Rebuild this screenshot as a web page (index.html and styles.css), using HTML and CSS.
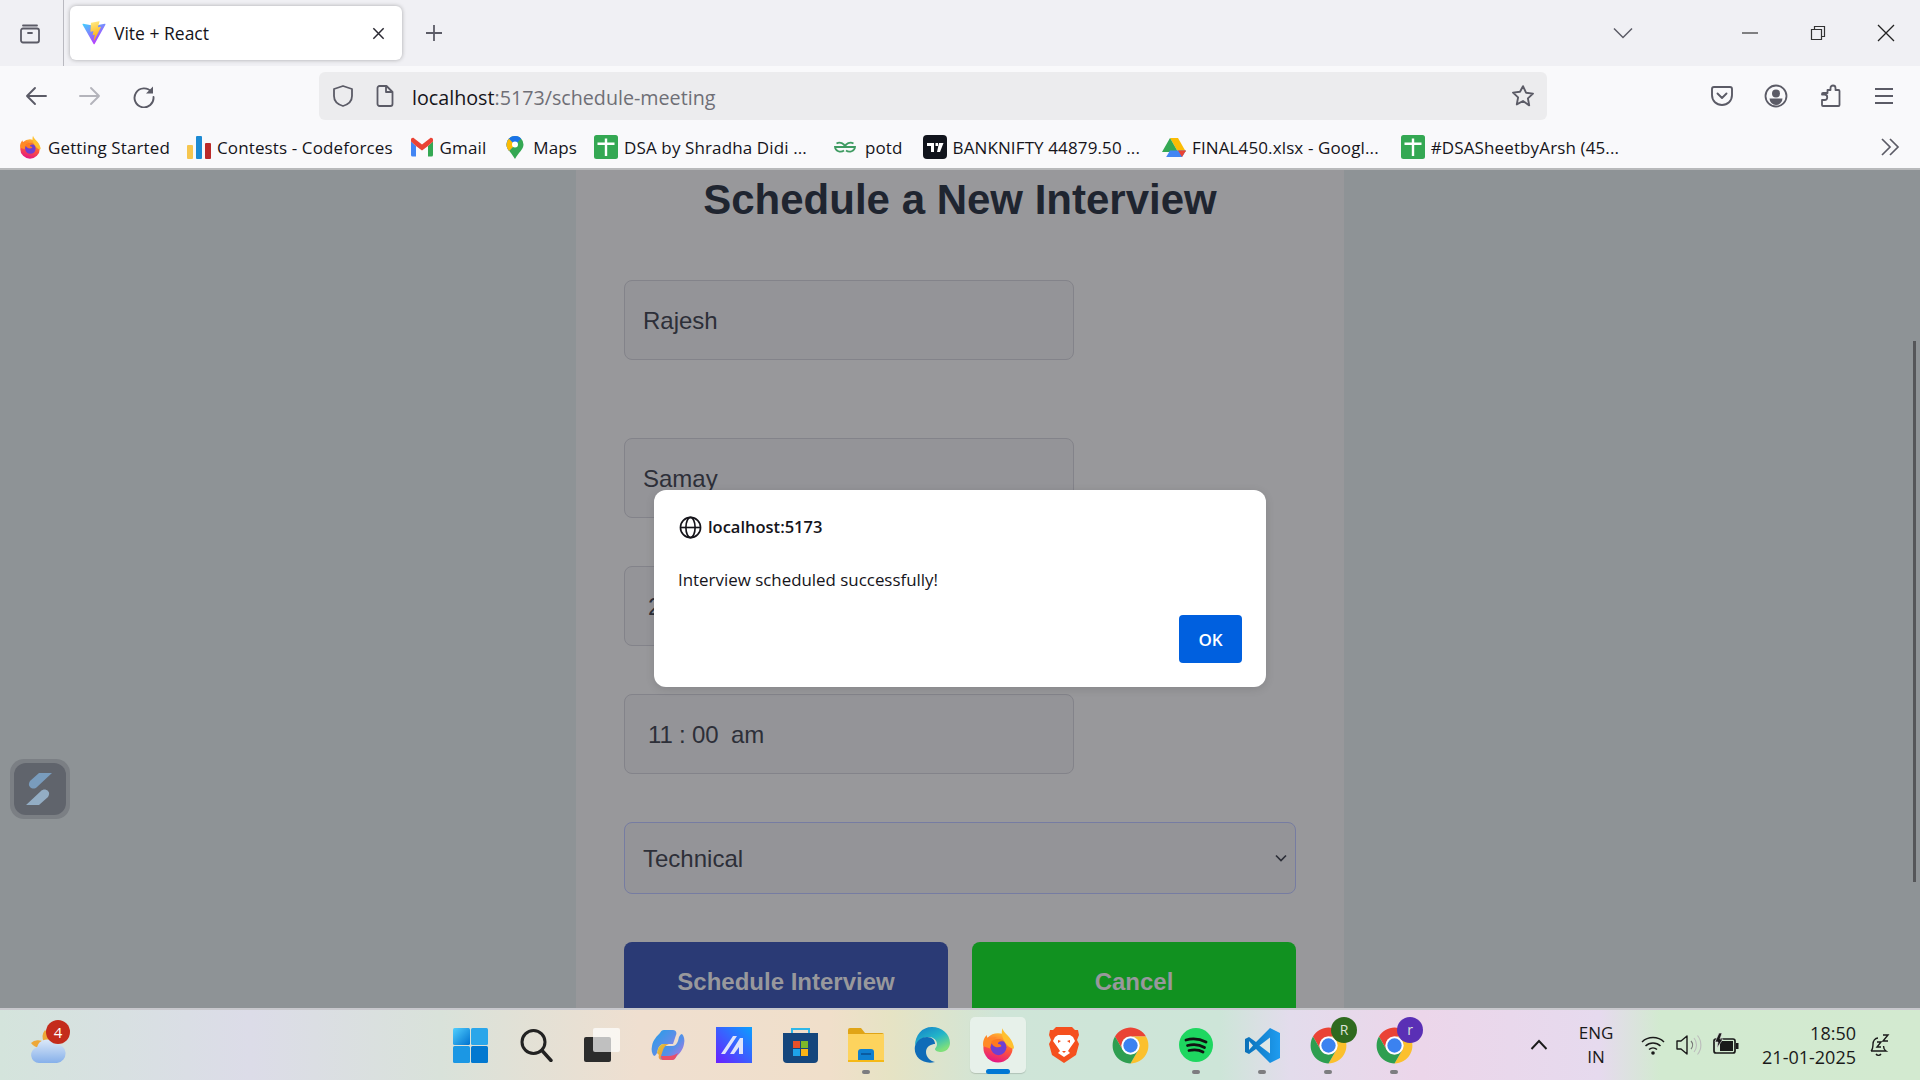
FILE: index.html
```html
<!DOCTYPE html>
<html lang="en">
<head>
    <meta charset="UTF-8" />
    <meta name="viewport" content="width=device-width, initial-scale=1.0" />
    <title>Schedule a New Interview</title>
    <link rel="stylesheet" href="styles.css">
</head>
<body>
<svg class="svg-defs" aria-hidden="true">
    <defs>
        <linearGradient id="viteBody" x1="0" y1="0" x2="0.6" y2="1"><stop offset="0" stop-color="#41d1ff"/><stop offset="1" stop-color="#bd34fe"/></linearGradient>
        <linearGradient id="viteBolt" x1="0.3" y1="0" x2="0.5" y2="1"><stop offset="0" stop-color="#ffea83"/><stop offset="1" stop-color="#ffa800"/></linearGradient>
        <linearGradient id="foxBody" x1="0.7" y1="0" x2="0.4" y2="1"><stop offset="0" stop-color="#ffbd2e"/><stop offset="0.5" stop-color="#ff5a36"/><stop offset="1" stop-color="#e31587"/></linearGradient>
        <linearGradient id="winBlue" x1="0" y1="0" x2="1" y2="1"><stop offset="0" stop-color="#52cffe"/><stop offset="1" stop-color="#0072cf"/></linearGradient>
        <linearGradient id="copilotTop" x1="0" y1="0" x2="1" y2="1"><stop offset="0" stop-color="#1f9fe8"/><stop offset="0.55" stop-color="#5a8fe8"/><stop offset="1" stop-color="#c86fe0"/></linearGradient>
        <linearGradient id="copilotLow" x1="0" y1="0" x2="1" y2="1"><stop offset="0" stop-color="#c8cf3a"/><stop offset="0.5" stop-color="#f2a33c"/><stop offset="1" stop-color="#e8506a"/></linearGradient>
        <linearGradient id="mathBg" x1="1" y1="0" x2="0" y2="1"><stop offset="0" stop-color="#0aa0ff"/><stop offset="1" stop-color="#6a1fff"/></linearGradient>
        <linearGradient id="edge" x1="0.8" y1="0.9" x2="0.2" y2="0"><stop offset="0" stop-color="#7fe07a"/><stop offset="0.5" stop-color="#22b5c9"/><stop offset="1" stop-color="#1786c9"/></linearGradient>
        <linearGradient id="cloud" x1="0" y1="0" x2="0" y2="1"><stop offset="0" stop-color="#dbe8f8"/><stop offset="1" stop-color="#86b0ea"/></linearGradient>
        <linearGradient id="vsBlue" x1="0" y1="0" x2="1" y2="0"><stop offset="0" stop-color="#0a70b8"/><stop offset="1" stop-color="#1f9cf0"/></linearGradient>
        <symbol id="fox" viewBox="0 0 32 32">
            <circle cx="16" cy="18.5" r="13" fill="url(#foxBody)"/>
            <path d="M20 1c1 5 8 7 10 16 1 4-3 2-6-1-3-4-6-9-4-15z" fill="#ffc02e"/>
            <path d="M3 17c-1-4 1-8 3-10 0 2 1 3 2 4 2-2 5-2 7-2-3 2-6 6-6 10z" fill="#ff8a26"/>
            <circle cx="16.5" cy="18" r="7" fill="#6e3fd2"/>
            <path d="M10 13c3-3 9-3 11 0-3-1-5 0-5 2 2 0 3 1 3 2-3 2-8 1-9-4z" fill="#ff7a1f"/>
        </symbol>
        <symbol id="chrome" viewBox="0 0 48 48">
            <path d="M6.7 14A20 20 0 0 1 41.3 14H24A10 10 0 0 0 15.3 29Z" fill="#ea4335"/>
            <path d="M24 14H41.3A20 20 0 0 1 24 44L32.7 29A10 10 0 0 0 24 14Z" fill="#fbc02d"/>
            <path d="M6.7 14L15.3 29A10 10 0 0 0 32.7 29L24 44A20 20 0 0 1 6.7 14Z" fill="#2e9e50"/>
            <circle cx="24" cy="24" r="10" fill="#fff"/>
            <circle cx="24" cy="24" r="8" fill="#3b82f0"/>
        </symbol>
        <symbol id="sheet" viewBox="0 0 24 24">
            <rect width="24" height="24" rx="2.5" fill="#34a853"/>
            <path d="M3.500 7.500h17v2.400h-7.300v11h-2.400v-11H3.500zM10.800 3.500h2.400v4h-2.400z" fill="#fff"/>
        </symbol>
    </defs>
</svg>

<div class="screen">
    <!-- tab strip -->
    <div class="tabstrip">
        <div class="tab-view">
            <svg class="icon" viewBox="0 0 24 24"><path d="M5 4.500h14M3 9.500a2 2 0 0 1 2-2h14a2 2 0 0 1 2 2v10a2 2 0 0 1-2 2H5a2 2 0 0 1-2-2zM10 12h4" fill="none" stroke="#5b5b66" stroke-width="1.800" stroke-linecap="round"/></svg>
        </div>
        <div class="tab">
            <svg class="favicon" viewBox="0 0 410 404"><path d="M399.641 59.5246L215.643 388.545C211.844 395.338 202.084 395.378 198.228 388.618L10.5817 59.5563C6.38087 52.1896 12.6802 43.2665 21.0281 44.7586L205.223 77.6824C206.398 77.8924 207.601 77.8904 208.776 77.6763L389.119 44.8058C397.439 43.2894 403.768 52.1434 399.641 59.5246Z" fill="url(#viteBody)"/><path d="M292.965 1.5744L156.801 28.2552C154.563 28.6937 152.906 30.5903 152.771 32.8664L144.395 174.33C144.198 177.662 147.258 180.248 150.51 179.498L188.42 170.749C191.967 169.931 195.172 173.055 194.443 176.622L183.18 231.775C182.422 235.487 185.907 238.661 189.532 237.56L212.947 230.446C216.577 229.344 220.065 232.527 219.297 236.242L201.398 322.875C200.278 328.294 207.486 331.249 210.492 326.603L212.5 323.5L323.454 102.072C325.312 98.3645 322.108 94.137 318.036 94.9228L279.014 102.454C275.347 103.161 272.227 99.746 273.262 96.1583L298.731 7.86689C299.767 4.27314 296.636 0.855181 292.965 1.5744Z" fill="url(#viteBolt)"/></svg>
            <span class="tab-title">Vite + React</span>
            <svg class="tab-close" viewBox="0 0 16 16"><path d="M2.500 2.500l11 11M13.500 2.500l-11 11" stroke="#2b2a33" stroke-width="1.600" fill="none"/></svg>
        </div>
        <div class="new-tab">
            <svg class="icon-sm" viewBox="0 0 20 20"><path d="M10 2v16M2 10h16" stroke="#5b5b66" stroke-width="1.800" fill="none"/></svg>
        </div>
        <div class="tab-list">
            <svg class="icon-sm" viewBox="0 0 20 12"><path d="M1 1.500l9 9 9-9" stroke="#5b5b66" stroke-width="1.500" fill="none"/></svg>
        </div>
        <div class="win-btn"><svg class="icon-sm" viewBox="0 0 20 20"><path d="M2 10h16" stroke="#333" stroke-width="1.200"/></svg></div>
        <div class="win-btn"><svg class="icon-sm" viewBox="0 0 20 20"><path d="M3.500 6.500h10v10h-10zM6.500 6.500v-3h10v10h-3" stroke="#333" stroke-width="1.200" fill="none"/></svg></div>
        <div class="win-btn"><svg class="icon-sm" viewBox="0 0 20 20"><path d="M2 2l16 16M18 2L2 18" stroke="#222" stroke-width="1.300" fill="none"/></svg></div>
    </div>

    <!-- nav toolbar -->
    <div class="toolbar">
        <div class="nav-btn"><svg class="icon" viewBox="0 0 24 24"><path d="M22 12H3M11 4l-8 8 8 8" stroke="#5b5b66" stroke-width="1.900" fill="none" stroke-linecap="round" stroke-linejoin="round"/></svg></div>
        <div class="nav-btn"><svg class="icon" viewBox="0 0 24 24"><path d="M2 12h19M13 4l8 8-8 8" stroke="#b4b4bb" stroke-width="1.900" fill="none" stroke-linecap="round" stroke-linejoin="round"/></svg></div>
        <div class="nav-btn"><svg class="icon" viewBox="0 0 24 24"><path d="M19.500 8A9.500 9.500 0 1 0 21.500 13" stroke="#5b5b66" stroke-width="1.900" fill="none" stroke-linecap="round"/><path d="M21 2.500v7h-7z" fill="#5b5b66"/></svg></div>
        <div class="urlbar">
            <svg class="icon" viewBox="0 0 24 24"><path d="M12 2l9 3v7c0 5-4 8.500-9 10-5-1.500-9-5-9-10V5z" fill="none" stroke="#5b5b66" stroke-width="1.800" stroke-linejoin="round"/></svg>
            <svg class="icon url-page" viewBox="0 0 24 24"><path d="M6.500 2h7l6 6v12a2 2 0 0 1-2 2h-11a2 2 0 0 1-2-2V4a2 2 0 0 1 2-2zM13 2v6h6" fill="none" stroke="#5b5b66" stroke-width="1.800" stroke-linejoin="round"/></svg>
            <span class="url-text">localhost<span class="url-dim">:5173/schedule-meeting</span></span>
            <svg class="icon url-star" viewBox="0 0 24 24"><path d="M12 2.200l3 6.500 7 .9-5.100 4.800 1.300 7L12 17l-6.200 3.400 1.300-7L2 8.600l7-.9z" fill="none" stroke="#5b5b66" stroke-width="1.900" stroke-linejoin="round"/></svg>
        </div>
        <div class="toolbar-right">
            <div class="nav-btn"><svg class="icon" viewBox="0 0 24 24"><path d="M4 3h16a2 2 0 0 1 2 2v6c0 6-4.500 10-10 10S2 17 2 11V5a2 2 0 0 1 2-2z" fill="none" stroke="#5b5b66" stroke-width="1.900"/><path d="M7.500 9.500L12 14l4.500-4.500" fill="none" stroke="#5b5b66" stroke-width="1.900" stroke-linecap="round" stroke-linejoin="round"/></svg></div>
            <div class="nav-btn"><svg class="icon" viewBox="0 0 24 24"><circle cx="12" cy="12" r="10.500" fill="none" stroke="#5b5b66" stroke-width="1.800"/><circle cx="12" cy="9.500" r="4" fill="#5b5b66"/><path d="M5.500 14.500h13a6.500 6.500 0 0 1-13 0z" fill="#5b5b66"/></svg></div>
            <div class="nav-btn"><svg class="icon" viewBox="0 0 24 24"><path d="M9.500 6h3V4a2.500 2.500 0 0 1 5 0v2h3a1 1 0 0 1 1 1v14a1 1 0 0 1-1 1H5a1 1 0 0 1-1-1v-5h2.500a2 2 0 0 0 0-5.500H4V10a1 1 0 0 1 1-1h4.500z" fill="none" stroke="#5b5b66" stroke-width="1.800" stroke-linejoin="round"/></svg></div>
            <div class="nav-btn"><svg class="icon" viewBox="0 0 24 24"><path d="M3 5h18M3 12h18M3 19h18" stroke="#5b5b66" stroke-width="1.900"/></svg></div>
        </div>
    </div>

    <!-- bookmarks -->
    <div class="bookmarks">
        <div class="bookmark"><svg class="bm-icon"><use href="#fox"/></svg>Getting Started</div>
        <div class="bookmark"><svg class="bm-icon" viewBox="0 0 24 24"><rect x="0" y="10" width="6" height="14" rx="1" fill="#f6c64f"/><rect x="9" y="1" width="6" height="23" rx="1" fill="#1c8ad3"/><rect x="18" y="8" width="6" height="16" rx="1" fill="#bb2a2a"/></svg>Contests - Codeforces</div>
        <div class="bookmark"><svg class="bm-icon" viewBox="0 0 24 24"><path d="M1 6.500V20a1.500 1.500 0 0 0 1.500 1.500H6V11z" fill="#4285f4"/><path d="M18 11v10.500h3.500A1.500 1.500 0 0 0 23 20V6.500z" fill="#34a853"/><path d="M1 4.500C1 3 3 2.200 4 3.200L12 9.500l8-6.300c1-1 3-.2 3 1.300v2L18 11l-6 4.500L6 11 1 6.500z" fill="#ea4335"/></svg>Gmail</div>
        <div class="bookmark"><svg class="bm-icon" viewBox="0 0 24 24"><path d="M12 1a8.500 8.500 0 0 1 8.500 8.500c0 5-5 8-8.500 14.500-3.500-6.500-8.500-9.500-8.500-14.500A8.500 8.500 0 0 1 12 1z" fill="#34a853"/><path d="M6 3.500A8.500 8.500 0 0 1 12 1c2.500 0 4.500 1 6 2.600L6 16c-1.500-2-2.500-4-2.500-6.500C3.500 7 4.500 5 6 3.500z" fill="#4285f4"/><path d="M3.500 9.500c0 2.500 1 4.500 2.500 6.500l6-6-6-6.500A8.500 8.500 0 0 0 3.500 9.500z" fill="#fbbc04"/><path d="M12 1c2.500 0 4.500 1 6 2.600L12 10 6 3.500A8.500 8.500 0 0 1 12 1z" fill="#1a73e8"/><circle cx="12" cy="9.500" r="3" fill="#fff"/></svg>Maps</div>
        <div class="bookmark"><svg class="bm-icon"><use href="#sheet"/></svg>DSA by Shradha Didi ...</div>
        <div class="bookmark bm-potd"><svg class="bm-icon" viewBox="0 0 24 24"><path d="M3.500 8.500A5.500 5 0 0 1 12 12H2A5.500 5 0 0 0 11 15.500M20.500 8.500A5.500 5 0 0 0 12 12H22A5.500 5 0 0 1 13 15.500" fill="none" stroke="#3f9b62" stroke-width="1.800"/></svg>potd</div>
        <div class="bookmark bm-bank"><svg class="bm-icon" viewBox="0 0 24 24"><rect width="24" height="24" rx="4" fill="#11141c"/><path d="M4 8h7v9H8v-6H4zM12.500 8h2.500v3h-2.500zM16 8h4.500L17 17h-3z" fill="#fff"/></svg>BANKNIFTY 44879.50 ...</div>
        <div class="bookmark bm-wide"><svg class="bm-icon" viewBox="0 0 24 24"><path d="M8 3h8l8 14h-8z" fill="#fbbc04"/><path d="M8 3l8 14-4 .1L4 17 0 17z" fill="#34a853"/><path d="M4.200 22L8 15.500h16L20 22z" fill="#4285f4"/><path d="M20 22l-4-6.500h8z" fill="#ea4335"/></svg>FINAL450.xlsx - Googl...</div>
        <div class="bookmark bm-wide"><svg class="bm-icon"><use href="#sheet"/></svg>#DSASheetbyArsh (45...</div>
        <svg class="bm-more" viewBox="0 0 20 20"><path d="M2 2l8 8-8 8M10 2l8 8-8 8" fill="none" stroke="#5b5b66" stroke-width="1.700"/></svg>
    </div>

    <!-- page content, dimmed behind the alert -->
    <main class="page">
        <div class="card">
            <h1 class="card-title">Schedule a New Interview</h1>
            <form class="form">
                <input class="field field-first" type="text" value="Rajesh" />
                <input class="field" type="text" value="Samay" />
                <input class="field field-date" type="text" value="21-01-2025" />
                <input class="field field-date" type="text" value="11 : 00  am" />
                <div class="select-wrap">
                    <select class="select">
                        <option>Technical</option>
                    </select>
                    <svg class="select-arrow" viewBox="0 0 12 8"><path d="M1 1.500l5 5 5-5" fill="none" stroke="#2d2f38" stroke-width="1.700"/></svg>
                </div>
                <div class="form-buttons">
                    <button class="btn btn-blue" type="button">Schedule Interview</button>
                    <button class="btn btn-green" type="button">Cancel</button>
                </div>
            </form>
        </div>

        <div class="side-widget">
            <div class="side-widget-inner">
                <svg class="side-mark" width="30" height="34" viewBox="0 0 30 34"><path d="M14 1h13L12 15c-2 2-5 2-7 0-2-2-1-4 0-6z" fill="#7ea6cc"/><path d="M16 19c2-2 5-2 7 0 2 2 1 4 0 6l-9 8H1z" fill="#9dbad4"/></svg>
            </div>
        </div>
        <div class="scroll-thumb"></div>
    </main>

    <!-- alert -->
    <div class="dialog">
        <div class="dialog-head">
            <svg class="dialog-globe" viewBox="0 0 24 24"><circle cx="12" cy="12" r="10.500" fill="none" stroke="#15141a" stroke-width="1.700"/><ellipse cx="12" cy="12" rx="4.800" ry="10.500" fill="none" stroke="#15141a" stroke-width="1.700"/><path d="M1.500 12h21" stroke="#15141a" stroke-width="1.700"/></svg>
            <span class="dialog-origin">localhost:5173</span>
        </div>
        <p class="dialog-text">Interview scheduled successfully!</p>
        <div class="dialog-actions"><button class="dialog-ok" type="button">OK</button></div>
    </div>

    <!-- windows taskbar -->
    <footer class="taskbar">
        <div class="weather">
            <svg width="36" height="34" viewBox="0 0 36 34"><path d="M15 1a11 11 0 0 0-1 12 11 11 0 0 0-13 1c3 4 8 6 13 4 6-3 7-12 1-17z" fill="#eea838"/><path d="M9 34a8 8 0 0 1-2-15.700A10 10 0 0 1 25 15a9.500 9.500 0 0 1 2 19z" fill="url(#cloud)"/></svg>
            <span class="weather-badge">4</span>
        </div>
        <div class="apps">
            <div class="app"><svg width="35" height="35" viewBox="0 0 35 35"><rect width="17" height="17" rx="1.500" fill="url(#winBlue)"/><rect x="18" width="17" height="17" rx="1.500" fill="#2aa6ea"/><rect y="18" width="17" height="17" rx="1.500" fill="#1b97e4"/><rect x="18" y="18" width="17" height="17" rx="1.500" fill="#0278d0"/></svg></div>
            <div class="app"><svg width="34" height="34" viewBox="0 0 34 34"><circle cx="14.500" cy="14" r="11.500" fill="none" stroke="#222" stroke-width="3"/><path d="M23 22.500l9 10" stroke="#222" stroke-width="3.400" stroke-linecap="round"/></svg></div>
            <div class="app"><svg width="36" height="34" viewBox="0 0 36 34"><rect x="0" y="9" width="27" height="25" rx="2" fill="#2c2c2c"/><rect x="9" y="0" width="27" height="24" rx="2" fill="#fff" fill-opacity="0.7"/></svg></div>
            <div class="app"><svg width="34" height="32" viewBox="0 0 34 32"><path d="M21 31h-9c-3 0-4-3-3-5l3-9h9c3 0 5-2 6-5l1-4c1-2 2-3 3-3 2 2 3 6 2 10-1 6-5 10-8 13-1 2-2 3-4 3z" fill="url(#copilotTop)"/><path d="M13 1h9c3 0 4 3 3 5l-3 9H13c-3 0-5 2-6 5l-1 4c-1 2-2 3-3 3-2-2-3-6-2-10 1-6 5-10 8-13 1-2 2-3 4-3z" fill="url(#copilotTop)"/><path d="M6 24l1-4c1-3 3-5 6-5h5c-3 1-5 3-6 6l-2 6c-1 2 0 4 2 4h-1c-3 0-4-3-3-5z" fill="url(#copilotLow)"/><path d="M12 31h9c2 0 3-1 4-3l2-4c-3 2-6 3-9 3h-8c0 2 1 4 2 4z" fill="#e8506a"/></svg></div>
            <div class="app"><svg width="36" height="36" viewBox="0 0 36 36"><rect width="36" height="36" fill="url(#mathBg)"/><path d="M5 27L17 9h4L9 27zM14 27L24 11h3v16h-4v-7l-5 7z" fill="#dfe4fb"/></svg></div>
            <div class="app"><svg width="35" height="36" viewBox="0 0 35 36"><path d="M9 7V2h17v5" fill="none" stroke="#2fb7e8" stroke-width="2"/><path d="M0 6h35v26a4 4 0 0 1-4 4H4a4 4 0 0 1-4-4z" fill="#15467c"/><rect x="10" y="14" width="7" height="7" fill="#e8502a"/><rect x="18" y="14" width="7" height="7" fill="#7cb82a"/><rect x="10" y="22" width="7" height="7" fill="#1ea3e8"/><rect x="18" y="22" width="7" height="7" fill="#fbb416"/></svg></div>
            <div class="app"><svg width="36" height="34" viewBox="0 0 36 34"><path d="M0 2a2 2 0 0 1 2-2h11l4 5h17a2 2 0 0 1 2 2v4H0z" fill="#e0a416"/><path d="M0 6h36v28H0z" fill="#fdd35d"/><path d="M10 32v-8a3 3 0 0 1 3-3h10a3 3 0 0 1 3 3v8z" fill="#0f80d0"/><path d="M13 26h10" stroke="#0a4f90" stroke-width="1.500"/><path d="M0 32h36v2H0z" fill="#f5b916"/></svg><span class="app-dot"></span></div>
            <div class="app"><svg width="36" height="36" viewBox="0 0 36 36"><path d="M18 0c10 0 18 7 18 16 0 5-4 9-9 9-3 0-6-1-6-3 0-1 2-2 2-5 0-4-4-7-8-7C8 10 3 14 1 19 1 8 8 0 18 0z" fill="url(#edge)"/><path d="M1 19c2-6 7-9 12-9 5 0 8 3 8 7-3 0-9 2-9 8 0 5 4 9 9 10C9 38-1 30 1 19z" fill="#0f6cb8"/></svg></div>
            <div class="app"><div class="app-tile"><svg class="fox-lg"><use href="#fox"/></svg></div><span class="app-bar"></span></div>
            <div class="app"><svg width="30" height="36" viewBox="0 0 30 36"><path d="M7 0h16l3 3 3 0 1 5-2 5 2 4-3 11-12 8-12-8L0 17l2-4-2-5 1-5 3 0z" fill="#f5501e"/><path d="M9 8h12l3 2 2 4-5 7-2 3 2 2-6 4-6-4 2-2-2-3-5-7 2-4z" fill="#fff"/><path d="M12 14l-3-1v3zM18 14l3-1v3zM13 24h4l-2 2z" fill="#f5501e"/></svg></div>
            <div class="app"><svg class="chrome-lg"><use href="#chrome"/></svg></div>
            <div class="app"><svg width="34" height="34" viewBox="0 0 34 34"><circle cx="17" cy="17" r="17" fill="#1ed760"/><path d="M7 12c7-2 14-1 20 2M8.500 17.500c6-1.500 12-1 17 2M10 22.500c5-1 10-.8 14 1.500" fill="none" stroke="#111" stroke-width="2.800" stroke-linecap="round"/></svg><span class="app-dot"></span></div>
            <div class="app"><svg width="35" height="35" viewBox="0 0 35 35"><path d="M25 0l10 5v25l-10 5-14-14-7 5-4-2v-13l4-2 7 5z" fill="url(#vsBlue)"/><path d="M25 9.500L14.500 17.500 25 25.500z" fill="#dfe7e6"/><path d="M4 13l4 4.500-4 4.500z" fill="#dfe7e6"/></svg><span class="app-dot"></span></div>
            <div class="app"><svg class="chrome-lg"><use href="#chrome"/></svg><span class="profile-badge profile-green">R</span><span class="app-dot"></span></div>
            <div class="app"><svg class="chrome-lg"><use href="#chrome"/></svg><span class="profile-badge profile-purple">r</span><span class="app-dot"></span></div>
        </div>
        <div class="tray">
            <svg class="tray-chevron" viewBox="0 0 18 12"><path d="M1.500 10L9 2l7.500 8" fill="none" stroke="#1a1a1a" stroke-width="1.900"/></svg>
            <div class="tray-lang">ENG<br>IN</div>
            <svg class="tray-wifi" viewBox="0 0 24 20"><path d="M1 7a16 16 0 0 1 22 0M4.500 11a11 11 0 0 1 15 0M8 14.500a6 6 0 0 1 8 0" fill="none" stroke="#1a1a1a" stroke-width="1.500"/><circle cx="12" cy="18" r="1.800" fill="#1a1a1a"/></svg>
            <svg class="tray-volume" viewBox="0 0 26 24"><path d="M1 8h4l6-5v18l-6-5H1z" fill="none" stroke="#1a1a1a" stroke-width="1.400" stroke-linejoin="round"/><path d="M15 8a6 6 0 0 1 0 8" fill="none" stroke="#777" stroke-width="1.200"/><path d="M18 5a11 11 0 0 1 0 14M21.500 2.500a15 15 0 0 1 0 19" fill="none" stroke="#bbb" stroke-width="1.100"/></svg>
            <svg class="tray-battery" viewBox="0 0 26 24"><rect x="1" y="6" width="21" height="14" rx="2" fill="none" stroke="#1a1a1a" stroke-width="1.700"/><rect x="7" y="8" width="13" height="10" fill="#1a1a1a"/><rect x="23" y="10" width="2.500" height="6" fill="#1a1a1a"/><path d="M6 0L2 9h3l-1 6 6-9H7l2-6z" fill="#1a1a1a" stroke="#e4e4e4" stroke-width="0.600"/></svg>
            <div class="tray-clock">18:50<br>21-01-2025</div>
            <svg class="tray-bell" viewBox="0 0 22 24"><path d="M3 18c2-2 2-4 2-7 0-3 2-6 5-6M3 18h15c-1.500-1-2.500-2.500-2.500-5M8 21a3 3 0 0 0 5 0" fill="none" stroke="#1a1a1a" stroke-width="1.400"/><path d="M9 9h4l-4 5h4M15 2h5l-5 6h5" fill="none" stroke="#1a1a1a" stroke-width="1.400"/></svg>
        </div>
    </footer>
</div>
</body>
</html>
```

FILE: styles.css
```css
* {
    box-sizing: border-box;
}

html,
body {
    margin: 0;
    height: 100%;
    overflow: hidden;
}

body {
    font-family: "Open Sans", "Noto Sans", sans-serif;
    color: #15141a;
}

.svg-defs {
    position: absolute;
    width: 0;
    height: 0;
}

.screen {
    position: relative;
    display: flex;
    flex-direction: column;
    height: 1080px;
}

.icon {
    display: block;
    width: 24px;
    height: 24px;
    flex: none;
}

.icon-sm {
    display: block;
    width: 20px;
    height: 20px;
}

/* Tab strip */
.tabstrip {
    display: flex;
    align-items: center;
    height: 66px;
    background-color: #f0f0f4;
}

.tab-view {
    display: flex;
    align-items: center;
    height: 66px;
    width: 64px;
    padding-left: 18px;
    border-right: 1px solid #b9b9c0;
}

.tab {
    display: flex;
    align-items: center;
    width: 332px;
    height: 54px;
    margin-left: 6px;
    padding: 0 16px 0 12px;
    background-color: #fff;
    border-radius: 6px;
    box-shadow: 0 0 4px rgba(0, 0, 0, 0.3);
}

.favicon {
    width: 24px;
    height: 24px;
    flex: none;
}

.tab-title {
    margin-left: 8px;
    font-size: 17.5px;
    color: #15141a;
}

.tab-close {
    width: 15px;
    height: 15px;
    margin-left: auto;
}

.new-tab {
    display: flex;
    justify-content: center;
    width: 64px;
}

.tab-list {
    margin-left: auto;
    margin-right: 83px;
}

.tab-list .icon-sm {
    height: 12px;
}

.win-btn {
    display: flex;
    justify-content: center;
    width: 68px;
}

/* Toolbar */
.toolbar {
    display: flex;
    align-items: center;
    height: 54px;
    padding: 6px 0 0 9px;
    background-color: #f9f9fb;
}

.nav-btn {
    display: flex;
    justify-content: center;
    width: 54px;
}

.urlbar {
    display: flex;
    align-items: center;
    width: 1228px;
    height: 48px;
    margin-left: 148px;
    padding: 0 12px;
    background-color: #ececee;
    border-radius: 6px;
}

.url-page {
    margin-left: 18px;
}

.url-text {
    margin-left: 15px;
    padding-top: 2px;
    font-size: 19.7px;
    color: #15141a;
}

.url-dim {
    color: #6f6f76;
}

.url-star {
    margin-left: auto;
}

.toolbar-right {
    display: flex;
    margin-left: 148px;
}

/* Bookmarks */
.bookmarks {
    display: flex;
    align-items: center;
    height: 50px;
    padding: 6px 0 0 18px;
    background-color: #f9f9fb;
    border-bottom: 2px solid #b8b9bb;
    font-size: 17px;
    letter-spacing: 0.12px;
    gap: 17px;
}

.bookmark {
    display: flex;
    align-items: center;
    gap: 6px;
    white-space: nowrap;
}

.bm-icon {
    width: 24px;
    height: 24px;
    flex: none;
}

.bm-potd {
    gap: 8px;
    margin-left: 9px;
}

.bm-bank {
    margin-left: 3px;
}

.bm-wide {
    margin-left: 5px;
}

.bm-more {
    width: 20px;
    height: 20px;
    margin-left: auto;
    margin-right: 20px;
}

/* Page behind the alert */
.page {
    position: relative;
    display: flex;
    justify-content: center;
    height: 838px;
    overflow: hidden;
    background-color: #8e9396;
    font-family: "Liberation Sans", Arial, sans-serif;
}

.card {
    width: 768px;
    height: 900px;
    padding: 6px 48px 0;
    background-color: #98989b;
}

.card-title {
    margin: 0 0 56px;
    height: 48px;
    font-size: 42px;
    line-height: 48px;
    font-weight: 700;
    text-align: center;
    color: #1f2530;
}

.form {
    display: flex;
    flex-direction: column;
    gap: 48px;
}

.field {
    display: block;
    width: 450px;
    height: 80px;
    padding: 2px 18px 0;
    background-color: #949498;
    border: 1px solid #83838a;
    border-radius: 8px;
    font-family: inherit;
    font-size: 24px;
    color: #2d2f38;
}

.field-first {
    margin-bottom: 30px;
}

.field-date {
    padding-left: 23px;
    word-spacing: -0.5px;
}

.select-wrap {
    position: relative;
}

.select {
    display: block;
    width: 672px;
    height: 72px;
    padding: 0 18px;
    background-color: #949498;
    border: 1px solid #767ca2;
    border-radius: 8px;
    appearance: none;
    font-family: inherit;
    font-size: 24px;
    color: #2d2f38;
}

.select-arrow {
    position: absolute;
    right: 9px;
    top: 32px;
    width: 12px;
    height: 8px;
}

.form-buttons {
    display: flex;
    gap: 24px;
}

.btn {
    flex: 1;
    height: 80px;
    border: none;
    border-radius: 8px;
    font-family: inherit;
    font-size: 24px;
    font-weight: 700;
    color: #98989c;
}

.btn-blue {
    background-color: #2a3a75;
}

.btn-green {
    background-color: #119120;
}

.side-widget {
    position: absolute;
    left: 10px;
    top: 589px;
    padding: 4px;
    background-color: #7b7f84;
    border-radius: 14px;
}

.side-widget-inner {
    display: flex;
    align-items: center;
    justify-content: center;
    width: 52px;
    height: 52px;
    background-color: #60646c;
    border-radius: 12px;
}

.side-mark {
    opacity: 0.85;
}

.scroll-thumb {
    position: absolute;
    left: 1913px;
    top: 171px;
    width: 3px;
    height: 541px;
    background-color: #555659;
}

/* Alert */
.dialog {
    position: absolute;
    left: 654px;
    top: 490px;
    width: 612px;
    height: 197px;
    padding: 24px;
    background-color: #fff;
    border-radius: 12px;
    box-shadow: 0 2px 10px rgba(0, 0, 0, 0.12);
}

.dialog-head {
    display: flex;
    align-items: center;
    gap: 6px;
    height: 26px;
    margin-left: 1px;
    font-size: 16.5px;
    font-weight: 600;
    color: #15141a;
}

.dialog-origin {
    margin-top: -2px;
}

.dialog-globe {
    width: 23px;
    height: 23px;
    flex: none;
}

.dialog-text {
    margin: 28px 0 0;
    height: 24px;
    font-size: 16.9px;
    line-height: 24px;
    color: #15141a;
}

.dialog-actions {
    display: flex;
    justify-content: flex-end;
    margin-top: 23px;
}

.dialog-ok {
    width: 63px;
    height: 48px;
    border: none;
    border-radius: 4px;
    background-color: #0060df;
    color: #fff;
    font-family: inherit;
    font-size: 17px;
    font-weight: 600;
}

/* Taskbar */
.taskbar {
    display: flex;
    align-items: center;
    height: 72px;
    flex: none;
    border-top: 2px solid #c8c8cd;
    font-size: 17px;
    color: #1a1a1a;
    background: linear-gradient(90deg, #d4e4dc 0, #dcdce8 250px, #d9e2da 440px, #efdfd0 640px, #f0dfca 830px, #e6e3c4 890px, #cfe5d8 1000px, #cde5d8 1220px, #e3dcec 1290px, #ecd6ea 1420px, #e6daee 1600px, #d2ead0 1660px, #d3ead0 1920px);
}

.weather {
    position: relative;
    width: 36px;
    margin-left: 30px;
    margin-top: 2px;
    height: 34px;
}

.weather-badge {
    position: absolute;
    left: 16px;
    top: -9px;
    width: 24px;
    height: 24px;
    border-radius: 50%;
    background-color: #c42b1c;
    color: #fff;
    font-size: 15px;
    line-height: 24px;
    text-align: center;
}

.apps {
    display: flex;
    margin-left: 371px;
}

.app {
    position: relative;
    display: flex;
    align-items: center;
    justify-content: center;
    width: 66px;
    height: 70px;
}

.app-dot {
    position: absolute;
    left: 29px;
    bottom: 6px;
    width: 8px;
    height: 4px;
    border-radius: 2px;
    background-color: #7d7d80;
}

.app-tile {
    display: flex;
    align-items: center;
    justify-content: center;
    width: 56px;
    height: 56px;
    border-radius: 5px;
    background-color: #e7f1ea;
    box-shadow: 0 1px 1px rgba(0, 0, 0, 0.15);
}

.app-bar {
    position: absolute;
    left: 21px;
    bottom: 6px;
    width: 24px;
    height: 5px;
    border-radius: 3px;
    background-color: #0078d4;
}

.fox-lg {
    width: 36px;
    height: 36px;
}

.chrome-lg {
    width: 43px;
    height: 43px;
}

.profile-badge {
    position: absolute;
    left: 36px;
    top: 7px;
    width: 26px;
    height: 26px;
    border-radius: 50%;
    color: #dce3d8;
    font-size: 14px;
    line-height: 26px;
    text-align: center;
}

.profile-green {
    background-color: #2f6a1f;
}

.profile-purple {
    background-color: #5a2fb5;
}

.tray {
    display: flex;
    align-items: center;
    margin-left: 103px;
}

.tray-chevron {
    width: 18px;
    height: 12px;
}

.tray-lang {
    width: 46px;
    margin-left: 25px;
    line-height: 24px;
    text-align: center;
}

.tray-wifi {
    width: 24px;
    height: 20px;
    margin-left: 22px;
}

.tray-volume {
    width: 26px;
    height: 24px;
    margin-left: 11px;
}

.tray-battery {
    width: 26px;
    height: 24px;
    margin-left: 11px;
}

.tray-clock {
    width: 110px;
    margin-left: 7px;
    font-size: 18px;
    line-height: 24px;
    text-align: right;
}

.tray-bell {
    width: 22px;
    height: 24px;
    margin-left: 12px;
}
```
